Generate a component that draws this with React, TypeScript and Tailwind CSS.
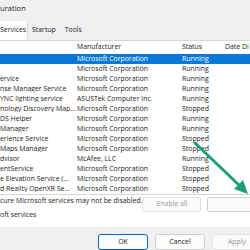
import React from 'react';

type Row = { name: string; maker: string; status: string };

const MS = 'Microsoft Corporation';

const rows: Row[] = [
  { name: '', maker: MS, status: 'Running' },
  { name: '', maker: MS, status: 'Running' },
  { name: 'ervice', maker: MS, status: 'Running' },
  { name: 'nse Manager Service', maker: MS, status: 'Running' },
  { name: 'YNC lighting service', maker: 'ASUSTek Computer Inc.', status: 'Running' },
  { name: 'nology Discovery Map...', maker: MS, status: 'Stopped' },
  { name: 'DS Helper', maker: MS, status: 'Running' },
  { name: 'Manager', maker: MS, status: 'Running' },
  { name: 'erience Service', maker: MS, status: 'Stopped' },
  { name: 'Maps Manager', maker: MS, status: 'Stopped' },
  { name: 'dvisor', maker: 'McAfee, LLC', status: 'Running' },
  { name: 'entService', maker: MS, status: 'Stopped' },
  { name: 'e Elevation Service (...', maker: MS, status: 'Stopped' },
  { name: 'd Reality OpenXR Se...', maker: MS, status: 'Stopped' },
];

export default function App() {
  return (
    <div
      className="relative w-[250px] h-[250px] overflow-hidden bg-[#f0f0f0] text-[6.9px] text-[#1b1b1b] leading-none"
      style={{ fontFamily: '"Open Sans", "Noto Sans", sans-serif' }}
    >
      {/* title */}
      <div className="h-[18px] flex items-center text-[7.6px]">uration</div>

      {/* tabs */}
      <div className="h-[22px] flex items-end">
        <div className="h-[19px] w-[28px] bg-white flex items-center border-r border-[#dcdcdc]">Services</div>
        <div className="h-[19px] flex items-center pl-[4px] pr-[9px]">Startup</div>
        <div className="h-[19px] flex items-center">Tools</div>
      </div>

      {/* tab page */}
      <div className="bg-white border-t border-[#d6d6d6] h-[187px] flex flex-col">
        {/* list */}
        <div className="border-b border-[#d6d6d6] flex flex-col">
          <div className="h-[13px] grid grid-cols-[77px_105px_43px_25px] items-center">
            <div />
            <div>Manufacturer</div>
            <div>Status</div>
            <div className="whitespace-nowrap overflow-hidden">Date Di</div>
          </div>
          {rows.map((r, i) => (
            <div
              key={i}
              className={
                i === 0
                  ? 'h-[10px] grid grid-cols-[77px_105px_43px_25px] items-center bg-[#0a78d7] text-white'
                  : 'h-[10px] grid grid-cols-[77px_105px_43px_25px] items-center'
              }
            >
              <div className="whitespace-nowrap overflow-hidden">{r.name}</div>
              <div className="whitespace-nowrap">{r.maker}</div>
              <div>{r.status}</div>
              <div />
            </div>
          ))}
        </div>

        <div className="h-[15px] flex mt-[2px]">
          <div className="w-[182px] whitespace-nowrap pt-[1px]">cure Microsoft services may not be disabled.</div>
          <div className="w-[59px] h-[15px] shrink-0 flex items-center justify-center border border-[#e3e3e3] bg-[#fbfbfb] text-[#9a9a9a] rounded-[2px]">
            Enable all
          </div>
          <div className="w-[59px] h-[15px] shrink-0 ml-[6px] border border-[#d0d0d0] bg-[#fbfbfb] rounded-[2px]" />
        </div>
        <div className="h-[10px] flex items-center mt-[-2px]">oft services</div>
      </div>

      {/* bottom buttons */}
      <div className="flex gap-[7px] pl-[98px] pt-[7px]">
        <div className="w-[50px] h-[16px] shrink-0 flex items-center justify-center bg-[#fdfdfd] border border-[#0067c0] rounded-[3px]">OK</div>
        <div className="w-[50px] h-[16px] shrink-0 flex items-center justify-center bg-[#fdfdfd] border border-[#d0d0d0] rounded-[3px]">Cancel</div>
        <div className="w-[50px] h-[16px] shrink-0 flex items-center justify-center bg-[#fbfbfb] border border-[#e3e3e3] text-[#9a9a9a] rounded-[3px]">Apply</div>
      </div>

      {/* green arrow overlay */}
      <svg className="absolute left-0 top-0" width="250" height="250" viewBox="0 0 250 250">
        <line x1="195" y1="143" x2="240" y2="186" stroke="#1c9f78" strokeWidth="3" strokeLinecap="round" />
        <polygon points="248,194 234,189 243,180" fill="#1c9f78" />
      </svg>
    </div>
  );
}
